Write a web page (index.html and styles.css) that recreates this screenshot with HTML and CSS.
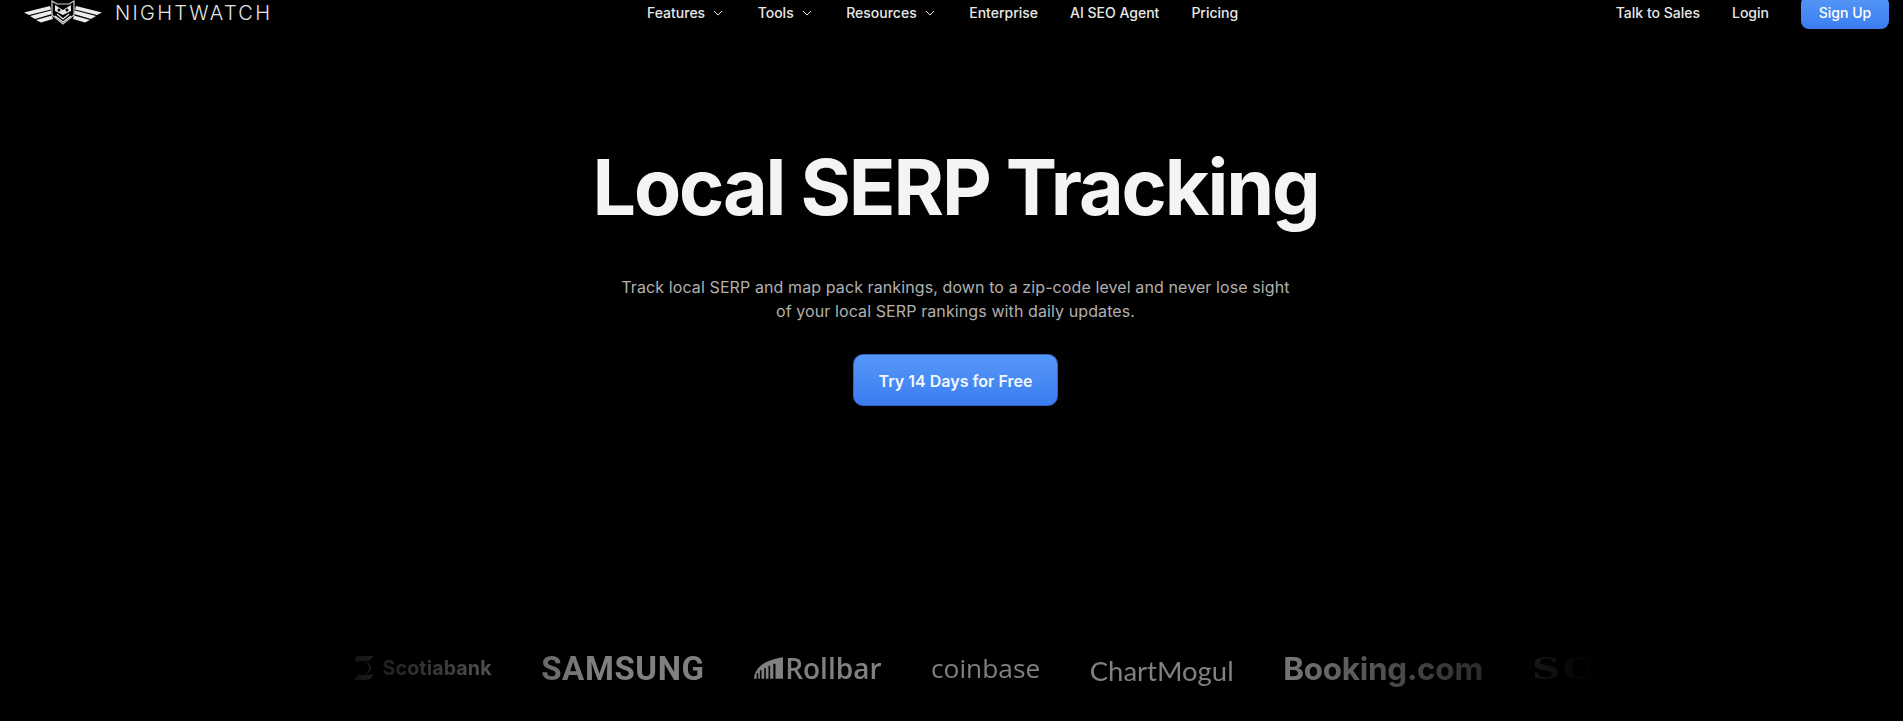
FILE: index.html
```html
<!DOCTYPE html>
<html lang="en">
<head>
    <meta charset="UTF-8">
    <meta name="viewport" content="width=device-width, initial-scale=1.0">
    <title>Local SERP Tracking - Nightwatch</title>
    <link rel="stylesheet" href="styles.css">
</head>
<body>

    <!-- Top navigation -->
    <header class="site-header">
        <a class="brand" href="#">
            <svg class="brand-owl" viewBox="0 0 78 25" aria-hidden="true">
                <g fill="#ececec">
                    <polygon points="0,12.500 26,6 27,9.500 5,15"/>
                    <polygon points="6,16 27,10.500 28,14 11,19"/>
                    <polygon points="12,20 28,15.500 29,19 17,22.500"/>
                    <polygon points="78,12.500 52,6 51,9.500 73,15"/>
                    <polygon points="72,16 51,10.500 50,14 67,19"/>
                    <polygon points="66,20 50,15.500 49,19 61,22.500"/>
                </g>
                <path d="M28 1 L33 4 H45 L50 1 V15 L39 24 L28 15 Z" fill="none" stroke="#cfcfcf" stroke-width="1.2"/>
                <path d="M31 5 L39 10 L47 5 V11 L39 15 L31 11 Z" fill="#e4e4e4"/>
                <circle cx="35" cy="10" r="1.5" fill="#000"/>
                <circle cx="43" cy="10" r="1.5" fill="#000"/>
                <path d="M31 16 L39 22 L47 16 M33 14 L39 19 L45 14" fill="none" stroke="#ececec" stroke-width="1.2"/>
            </svg>
            <span class="brand-name">NIGHTWATCH</span>
        </a>

        <nav class="main-nav">
            <a class="has-menu" href="#">Features <svg class="chevron" viewBox="0 0 10 6"><path d="M1 1l4 4 4-4"/></svg></a>
            <a class="has-menu" href="#">Tools <svg class="chevron" viewBox="0 0 10 6"><path d="M1 1l4 4 4-4"/></svg></a>
            <a class="has-menu" href="#">Resources <svg class="chevron" viewBox="0 0 10 6"><path d="M1 1l4 4 4-4"/></svg></a>
            <a href="#">Enterprise</a>
            <a href="#">AI SEO Agent</a>
            <a href="#">Pricing</a>
        </nav>

        <div class="header-actions">
            <a href="#">Talk to Sales</a>
            <a href="#">Login</a>
            <a class="signup-btn" href="#">Sign Up</a>
        </div>
    </header>

    <!-- Hero -->
    <main class="hero">
        <h1>Local SERP Tracking</h1>
        <p>Track local SERP and map pack rankings, down to a zip-code level and never lose sight<br>of your local SERP rankings with daily updates.</p>
        <a class="cta-btn" href="#">Try 14 Days for Free</a>
    </main>

    <!-- Customer logos, faded at both ends -->
    <section class="logo-strip">
        <div class="logo logo-scotia">
            <svg class="scotia-mark" viewBox="0 0 21 24" aria-hidden="true">
                <path d="M5 0H21L16 5H7C5 5 5 6 6 6H12A6 6 0 0 1 12 18H6L1 24H13C17 24 20 21 20 18L16 19H6C4 19 4 18 5 18H10A6 6 0 0 0 10 6H5C1 6 1 1 5 0Z"/>
            </svg>
            <span>Scotiabank</span>
        </div>
        <div class="logo logo-samsung">SAMSUNG</div>
        <div class="logo logo-rollbar">
            <svg class="rollbar-mark" viewBox="0 0 27 20" aria-hidden="true">
                <path d="M0 20C1 10 8 3 27 0V20H20V6H18V20H15V8H13.500V20H11V10H9.500V20H7V12H5.500V20H4V15H2.500V20Z"/>
            </svg>
            <span>Rollbar</span>
        </div>
        <div class="logo logo-coinbase">coinbase</div>
        <div class="logo logo-chartmogul">ChartMogul</div>
        <div class="logo logo-booking">Booking.com</div>
        <div class="logo logo-sony">SONY</div>
    </section>

</body>
</html>
```

FILE: styles.css
```css
/* Basic reset */
html, body {
    margin: 0;
    padding: 0;
    height: 100%;
    overflow: hidden;
    background-color: #000000;
    color: #ffffff;
    font-family: Inter, "Liberation Sans", sans-serif;
}

a {
    color: inherit;
    text-decoration: none;
}

/* Header - page is scrolled a little, so it starts above the fold */
.site-header {
    height: 33px;
    margin-top: -4px;
    padding: 0 14px 0 24px;
    display: grid;
    grid-template-columns: 623px auto 1fr;
    align-items: center;
    font-size: 14px;
    font-weight: 500;
    color: #e8e8e8;
}

.brand {
    display: flex;
    align-items: center;
    gap: 13px;
}

.brand-owl {
    width: 78px;
    height: 25px;
    display: block;
}

.brand-name {
    font-size: 20px;
    font-weight: 300;
    letter-spacing: 2.3px;
    color: #e4e4e4;
}

.main-nav {
    display: flex;
    align-items: center;
    gap: 32px;
}

.main-nav a {
    display: flex;
    align-items: center;
    gap: 8px;
}

.main-nav a.has-menu {
    margin-right: 2.5px;
}

.chevron {
    width: 10px;
    height: 6px;
    fill: none;
    stroke: #e0e0e0;
    stroke-width: 1;
}

.header-actions {
    display: flex;
    align-items: center;
    justify-content: flex-end;
    gap: 32px;
}

.signup-btn {
    width: 88px;
    height: 33px;
    display: flex;
    align-items: center;
    justify-content: center;
    border-radius: 8px;
    background: linear-gradient(#5598f8, #3b7df0);
    color: #ffffff;
}

/* Hero */
.hero {
    padding-left: 8px;
    display: flex;
    flex-direction: column;
    align-items: center;
    text-align: center;
}

.hero h1 {
    margin: 0;
    padding-top: 110px;
    font-size: 77px;
    line-height: 96px;
    font-weight: 700;
    letter-spacing: -2.1px;
    color: #f4f4f4;
}

.hero p {
    margin: 40px 0 0;
    font-size: 16px;
    line-height: 24px;
    letter-spacing: 0.1px;
    color: #b0b0b0;
}

.cta-btn {
    width: 205px;
    height: 52px;
    margin-top: 31px;
    padding-top: 2px;
    box-sizing: border-box;
    display: flex;
    align-items: center;
    justify-content: center;
    border-radius: 10px;
    border: 1px solid #2f66c4;
    background: linear-gradient(#5598f8, #3b7df0);
    font-size: 16px;
    font-weight: 600;
    color: #f4f7ff;
}

/* Logo strip */
.logo-strip {
    width: 1280px;
    height: 40px;
    margin: 242px auto 0;
    padding-left: 41px;
    box-sizing: border-box;
    display: flex;
    align-items: center;
    gap: 49.5px;
    overflow: hidden;
    color: #808080;
    filter: blur(0.7px);
    -webkit-mask-image: linear-gradient(90deg, transparent 0, #000 22%, #000 74%, transparent 100%);
    mask-image: linear-gradient(90deg, transparent 0, #000 22%, #000 74%, transparent 100%);
}

.logo {
    flex: none;
    display: flex;
    align-items: center;
    white-space: nowrap;
    fill: currentColor;
}

.logo-scotia {
    gap: 9px;
    font-size: 19.5px;
    font-weight: 700;
    letter-spacing: 0.2px;
}

.scotia-mark {
    width: 21px;
    height: 24px;
}

.logo-samsung {
    font-family: Roboto, sans-serif;
    font-size: 33px;
    font-weight: 700;
    letter-spacing: 0.6px;
}

.logo-rollbar {
    gap: 2px;
    font-family: "Open Sans", sans-serif;
    font-size: 28px;
    font-weight: 600;
}

.rollbar-mark {
    width: 29px;
    height: 22px;
}

.logo-coinbase {
    font-family: "Open Sans", sans-serif;
    font-size: 26.3px;
}

.logo-chartmogul {
    padding-top: 4px;
    font-family: Lato, sans-serif;
    font-size: 27.5px;
}

.logo-booking {
    font-size: 31.5px;
    font-weight: 700;
    letter-spacing: -0.3px;
}

/* last logo runs out of the strip, only its first letters show */
.logo-sony {
    font-family: "DejaVu Serif", serif;
    font-size: 30px;
    font-weight: 700;
    letter-spacing: 2px;
    transform: scaleX(1.3);
    transform-origin: left center;
}
```
